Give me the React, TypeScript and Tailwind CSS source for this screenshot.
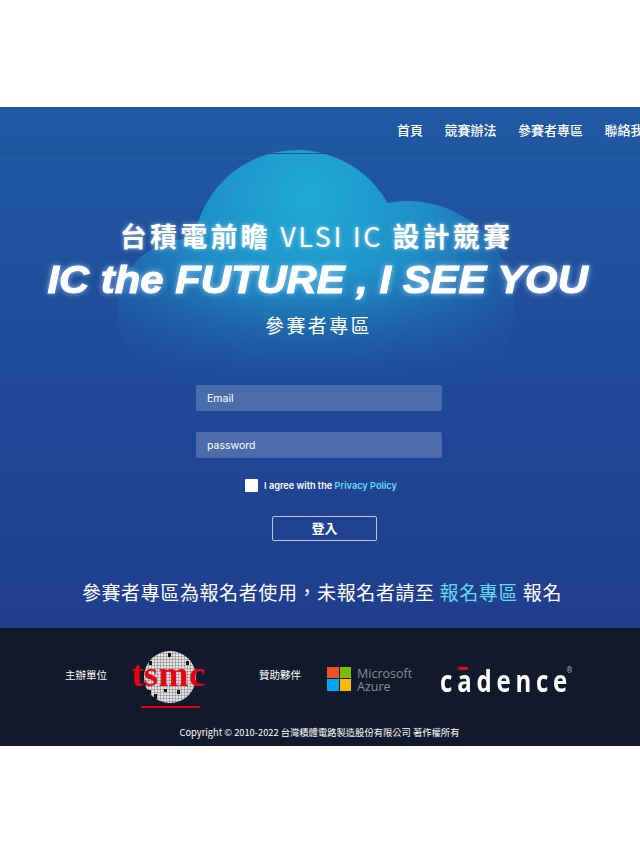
const cjk = "font-['Noto_Sans_CJK_TC','Noto_Sans',sans-serif]";

const Cloud = () => (
  <svg className="absolute left-0 top-0" width="640" height="300" viewBox="0 0 640 300">
    <defs>
      <radialGradient id="cloudFill" gradientUnits="userSpaceOnUse" cx="310" cy="90" r="230">
        <stop offset="0" stopColor="#1fabd6" />
        <stop offset="0.5" stopColor="#1f8ec6" />
        <stop offset="1" stopColor="#1f58a3" />
      </radialGradient>
      <linearGradient id="cloudFade" x1="0" y1="0" x2="0" y2="1">
        <stop offset="0.5" stopColor="white" />
        <stop offset="1" stopColor="white" stopOpacity="0" />
      </linearGradient>
      <mask id="cloudMask">
        <rect x="0" y="40" width="640" height="240" fill="url(#cloudFade)" />
      </mask>
    </defs>
    <g mask="url(#cloudMask)" fill="url(#cloudFill)">
      <circle cx="297" cy="147" r="104" />
      <circle cx="408" cy="200" r="106" />
      <circle cx="188" cy="203" r="71" />
      <rect x="188" y="150" width="220" height="140" />
    </g>
  </svg>
);

const TsmcLogo = () => (
  <div className="relative w-[76px] h-[62px] flex items-center justify-center">
    <svg className="absolute left-0 top-0" width="76" height="62" viewBox="0 0 76 62">
      <defs>
        <pattern id="waferGrid" width="3" height="3" patternUnits="userSpaceOnUse">
          <rect width="3" height="3" fill="#e4e4e4" />
          <path d="M3 0H0V3" fill="none" stroke="#555" strokeWidth="0.7" />
        </pattern>
      </defs>
      <circle cx="37" cy="27" r="26" fill="url(#waferGrid)" />
      <g fill="#111">
        <rect x="35" y="3" width="3" height="4" />
        <rect x="16" y="11" width="3" height="4" />
        <rect x="53" y="11" width="3" height="4" />
        <rect x="14" y="40" width="4" height="4" />
        <rect x="21" y="44" width="3" height="5" />
        <rect x="31" y="39" width="3" height="3" />
        <rect x="44" y="40" width="3" height="4" />
        <rect x="18" y="47" width="3" height="4" />
      </g>
    </svg>
    <span className="relative -ml-[5px] font-['Liberation_Serif',serif] font-bold text-[36px] leading-none text-[#e60012] tracking-[0.6px] -mt-[15px]">
      tsmc
    </span>
    <div className="absolute left-[8px] top-[56px] w-[59px] h-[2px] bg-[#e60012]" />
  </div>
);

const AzureLogo = () => (
  <div className="flex items-center gap-[6px]">
    <div className="grid grid-cols-2 gap-[1px] w-[24px] h-[24px]">
      <div className="bg-[#f25022]" />
      <div className="bg-[#7fba00]" />
      <div className="bg-[#00a4ef]" />
      <div className="bg-[#ffb900]" />
    </div>
    <div className="mt-[2px] font-['Open_Sans',sans-serif] text-[12.5px] leading-[13px] text-[#8a8e95]">
      <div>Microsoft</div>
      <div>Azure</div>
    </div>
  </div>
);

const CadenceLogo = () => (
  <div className="relative mt-[4px] font-['Open_Sans',sans-serif] font-bold text-[30px] leading-none text-white tracking-[6px] scale-x-[0.8] origin-left w-[160px]">
    cadence
    <div className="absolute left-[23px] top-[1px] w-[12px] h-[3px] bg-[#e60012]" />
    <span className="absolute left-[158px] top-[-1px] text-[9px] font-normal tracking-normal text-[#b5b8bd]">®</span>
  </div>
);

export default function App() {
  return (
    <div className={`w-[640px] h-[853px] bg-white pt-[107px] overflow-hidden ${cjk}`}>
      <section className="relative h-[521px] overflow-hidden bg-gradient-to-b from-[#1f5aa2] via-[#1f4a98] to-[#1f3d8c] text-white">
        <Cloud />

        <header className="relative h-[47px] border-b border-[#1c4f94] flex items-center pl-[397px] gap-[21.5px] whitespace-nowrap text-[13px] font-medium">
          <span>首頁</span>
          <span>競賽辦法</span>
          <span>參賽者專區</span>
          <span>聯絡我們</span>
        </header>

        <div className="relative flex flex-col items-center">
          <h1 className="mt-[65px] -ml-[7px] text-[27px] leading-[34px] font-bold tracking-[3.2px] whitespace-nowrap [text-shadow:0_0_4px_rgba(255,255,255,0.6)]">
            台積電前瞻 <span className="font-normal tracking-[2.6px]">VLSI IC</span> 設計競賽
          </h1>
          <h2 className="mt-[5px] -ml-[5px] font-['Liberation_Sans',sans-serif] italic font-bold text-[38px] leading-[44px] scale-x-[1.1] whitespace-nowrap [-webkit-text-stroke:1px_white] [text-shadow:0_0_6px_rgba(190,225,255,0.9)]">
            IC the FUTURE , I SEE YOU
          </h2>
          <p className="mt-[10px] -ml-[3px] text-[19px] leading-[26px] tracking-[2.4px]">參賽者專區</p>

          <form className="mt-[47px] -ml-[2px] w-[246px] flex flex-col gap-[21px]">
            <div className="h-[26px] pt-[2px] rounded-[2px] bg-white/20 flex items-center px-[11px] font-['Inter',sans-serif] text-[10.5px]">
              Email
            </div>
            <div className="h-[26px] pt-[2px] rounded-[2px] bg-white/20 flex items-center px-[11px] font-['Inter',sans-serif] text-[10.5px]">
              password
            </div>
          </form>

          <div className="mt-[21px] ml-[2px] flex items-center gap-[6px] font-['Inter',sans-serif] text-[9.2px] font-semibold whitespace-nowrap">
            <div className="w-[13px] h-[13px] bg-white rounded-[1px]" />
            <span>
              I agree with the <span className="text-[#63dcf2]">Privacy Policy</span>
            </span>
          </div>

          <button className="mt-[23px] ml-[9px] w-[105px] h-[25px] pb-[2px] rounded-[2px] border border-white/70 text-[13px] font-bold flex items-center justify-center">
            登入
          </button>

          <p className="mt-[38px] ml-[4px] text-[19px] leading-[26px] tracking-[0.6px] whitespace-nowrap">
            參賽者專區為報名者使用，未報名者請至 <span className="text-[#63dcf2]">報名專區</span> 報名
          </p>
        </div>
      </section>

      <footer className="h-[118px] bg-[#101a2b] text-white pt-[22px]">
        <div className="flex items-center h-[62px] pl-[65px] text-[10.5px] whitespace-nowrap">
          <span className="-mt-[13px]">主辦單位</span>
          <div className="ml-[26px]">
            <TsmcLogo />
          </div>
          <span className="ml-[50px] -mt-[13px]">贊助夥伴</span>
          <div className="ml-[26px] -mt-[5px]">
            <AzureLogo />
          </div>
          <div className="ml-[28px] -mt-[5px]">
            <CadenceLogo />
          </div>
        </div>
        <p className="mt-[13px] -ml-[1px] text-center text-[9.3px] leading-[14px]">
          Copyright © 2010-2022 台灣積體電路製造股份有限公司 著作權所有
        </p>
      </footer>
    </div>
  );
}
